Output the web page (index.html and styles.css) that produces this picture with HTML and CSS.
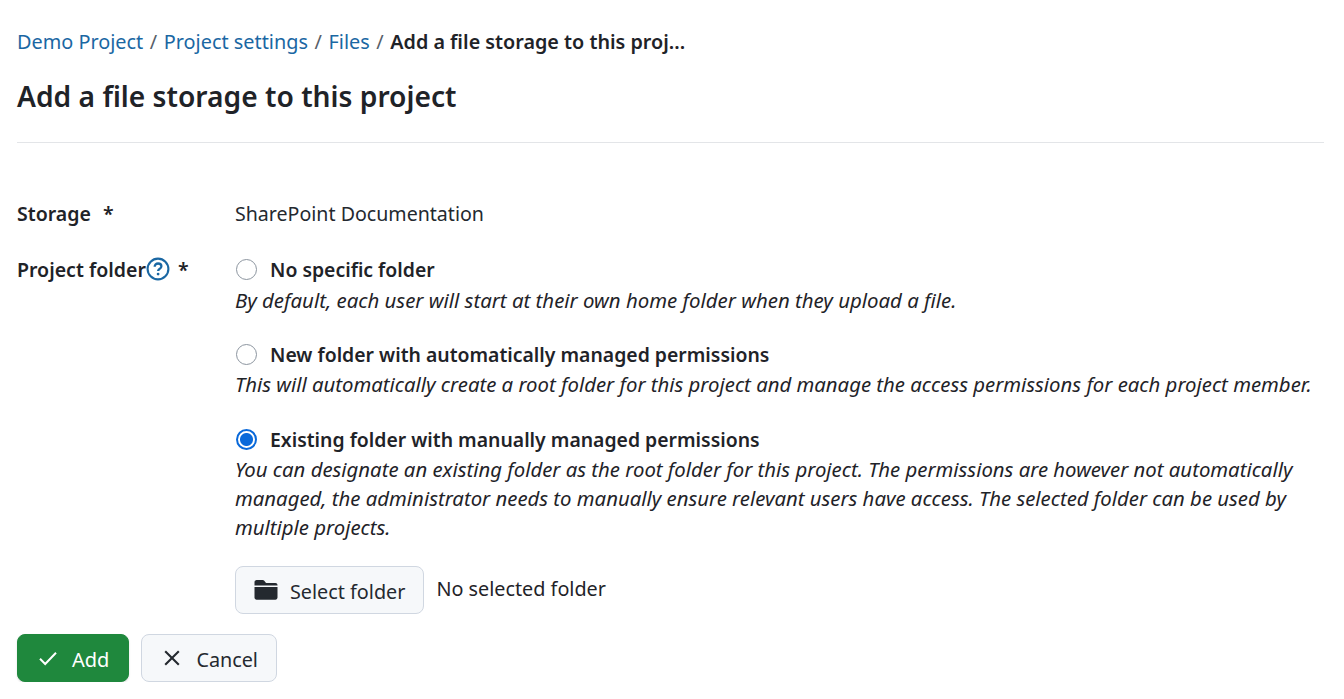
FILE: index.html
```html
<!DOCTYPE html>
<html lang="en">
<head>
<meta charset="utf-8">
<title>Add a file storage to this project</title>
<link rel="stylesheet" href="styles.css">
</head>
<body>
<main class="page">
  <nav class="crumbs">
    <a href="#">Demo Project</a><span class="sep">/</span><a href="#">Project settings</a><span class="sep">/</span><a href="#">Files</a><span class="sep">/</span><strong>Add a file storage to this proj...</strong>
  </nav>
  <h1 class="title">Add a file storage to this project</h1>
  <form class="form">
    <div class="row row-storage">
      <div class="label"><span>Storage</span><span class="req req-wide">*</span></div>
      <div class="value">SharePoint Documentation</div>
    </div>
    <div class="row">
      <div class="label"><span>Project folder</span>
        <svg class="help" width="24" height="24" viewBox="0 0 24 24" aria-hidden="true"><circle cx="12" cy="12" r="10.4" fill="none" stroke="#1a67a3" stroke-width="2.1"/><path d="M8.7 9.7c0-1.9 1.4-3.2 3.4-3.2s3.3 1.2 3.3 2.8c0 1.4-.9 2.1-1.9 2.7-.9.6-1.4 1-1.4 2.1" fill="none" stroke="#1a67a3" stroke-width="2.3"/><circle cx="12.1" cy="17.1" r="1.4" fill="#1a67a3"/></svg>
        <span class="req">*</span></div>
      <div class="options">
        <div class="option">
          <label class="choice"><span class="radio"></span>No specific folder</label>
          <p class="hint hint-first">By default, each user will start at their own home folder when they upload a file.</p>
        </div>
        <div class="option">
          <label class="choice"><span class="radio"></span>New folder with automatically managed permissions</label>
          <p class="hint">This will automatically create a root folder for this project and manage the access permissions for each project member.</p>
        </div>
        <div class="option">
          <label class="choice"><span class="radio checked"></span>Existing folder with manually managed permissions</label>
          <p class="hint">You can designate an existing folder as the root folder for this project. The permissions are however not automatically managed, the administrator needs to manually ensure relevant users have access. The selected folder can be used by multiple projects.</p>
        </div>
        <div class="picker">
          <button type="button" class="btn btn-select">
            <svg class="ico-folder" width="24" height="24" viewBox="0 0 24 24" aria-hidden="true"><path d="M0.5 4.2C0.5 3 1.4 2 2.6 2h6c.7 0 1.3.3 1.7.8L11.6 4.6c.2.2.4.3.7.3h9.1c1.2 0 2.1.9 2.1 2.1v.6H0.5z" fill="#24292f"/><path d="M0.5 9h23v10.6c0 1.2-.9 2.2-2.1 2.2H2.6c-1.2 0-2.1-1-2.1-2.2z" fill="#24292f"/></svg>
            <span class="btn-text">Select folder</span>
          </button>
          <span class="picked">No selected folder</span>
        </div>
      </div>
    </div>
    <div class="actions">
      <button type="button" class="btn btn-add">
        <svg width="20" height="20" viewBox="0 0 20 20" aria-hidden="true"><path d="M2 10.8l5.2 5.2L18 4.8" fill="none" stroke="#fff" stroke-width="2"/></svg>
        <span class="btn-text">Add</span>
      </button>
      <button type="button" class="btn btn-cancel">
        <svg width="20" height="20" viewBox="0 0 20 20" aria-hidden="true"><path d="M3.2 3.2l13.6 13.6M16.8 3.2L3.2 16.8" fill="none" stroke="#24292f" stroke-width="2.1"/></svg>
        <span class="btn-text">Cancel</span>
      </button>
    </div>
  </form>
</main>
</body>
</html>
```
FILE: styles.css
```css
* { box-sizing: border-box; }
html, body { margin: 0; padding: 0; background: #fff; }
body {
  font-family: "Noto Sans", "Open Sans", sans-serif;
  font-size: 20px;
  line-height: 29.5px;
  color: #1f2328;
  overflow: hidden;
}
.page { padding: 27px 20px 0 17px; }
.crumbs { display: flex; align-items: center; white-space: nowrap; height: 30px; font-size: 19.85px; }
.crumbs a { color: #1a67a3; text-decoration: none; }
.crumbs .sep { margin: 0 6.6px; color: #57606a; }
.crumbs strong { font-weight: 600; font-size: 19.75px; }
.title {
  margin: 0;
  padding: 19px 0 26px;
  font-size: 28.2px;
  line-height: 40px;
  font-weight: 600;
  border-bottom: 1px solid #e3e5e8;
}
.form { margin-top: 56px; }
.row { display: grid; grid-template-columns: 218px 1fr; }
.row-storage { margin-bottom: 26px; }
.label { font-weight: 600; font-size: 19.55px; display: flex; align-items: flex-start; white-space: nowrap; }
.req { margin-left: 8px; }
.req-wide { margin-left: 12px; }
.help { margin-top: 2px; flex: none; }
.value { color: #24292f; font-size: 19.6px; }
.option { margin-bottom: 25.6px; }
.choice { display: flex; align-items: center; gap: 13px; font-weight: 600; font-size: 19.4px; }
.radio {
  width: 21px; height: 21px; margin-left: 1px; border-radius: 50%;
  border: 1.5px solid #8c959f; background: #fff; flex: none;
}
.radio.checked {
  border: 2px solid #0969da;
  background: radial-gradient(circle, #0969da 0 6px, #fff 7px);
}
.hint { margin: 0.8px 0 0; font-style: italic; font-size: 20.34px; line-height: 29.2px; }
.hint-first { margin: 1.6px 0 0; font-size: 20.4px; }
.option:first-child { margin-bottom: 24.9px; }
.picker { display: flex; align-items: flex-start; gap: 12px; margin-top: -2.6px; }
.picked { line-height: 46px; font-size: 19.8px; }
.btn {
  display: inline-flex; align-items: center; gap: 12px;
  height: 48px; padding: 0 17px 0 18px;
  font: inherit; color: #24292f;
  background: #f6f8fa;
  border: 1px solid #d0d7e1;
  border-radius: 8px;
}
.btn-text { position: relative; top: 2px; }
.btn-select { font-size: 19.8px; padding-right: 18px; }
.actions { display: flex; gap: 12px; margin-top: 20px; }
.btn-add { background: #1f883d; border-color: #1f883d; color: #fff; box-shadow: 0 1px 2px rgba(31,35,40,.15); padding: 0 19px 0 20px; gap: 14px; }
.btn-cancel { padding: 0 18.4px 0 20px; gap: 14px; font-size: 19.8px; }
```
